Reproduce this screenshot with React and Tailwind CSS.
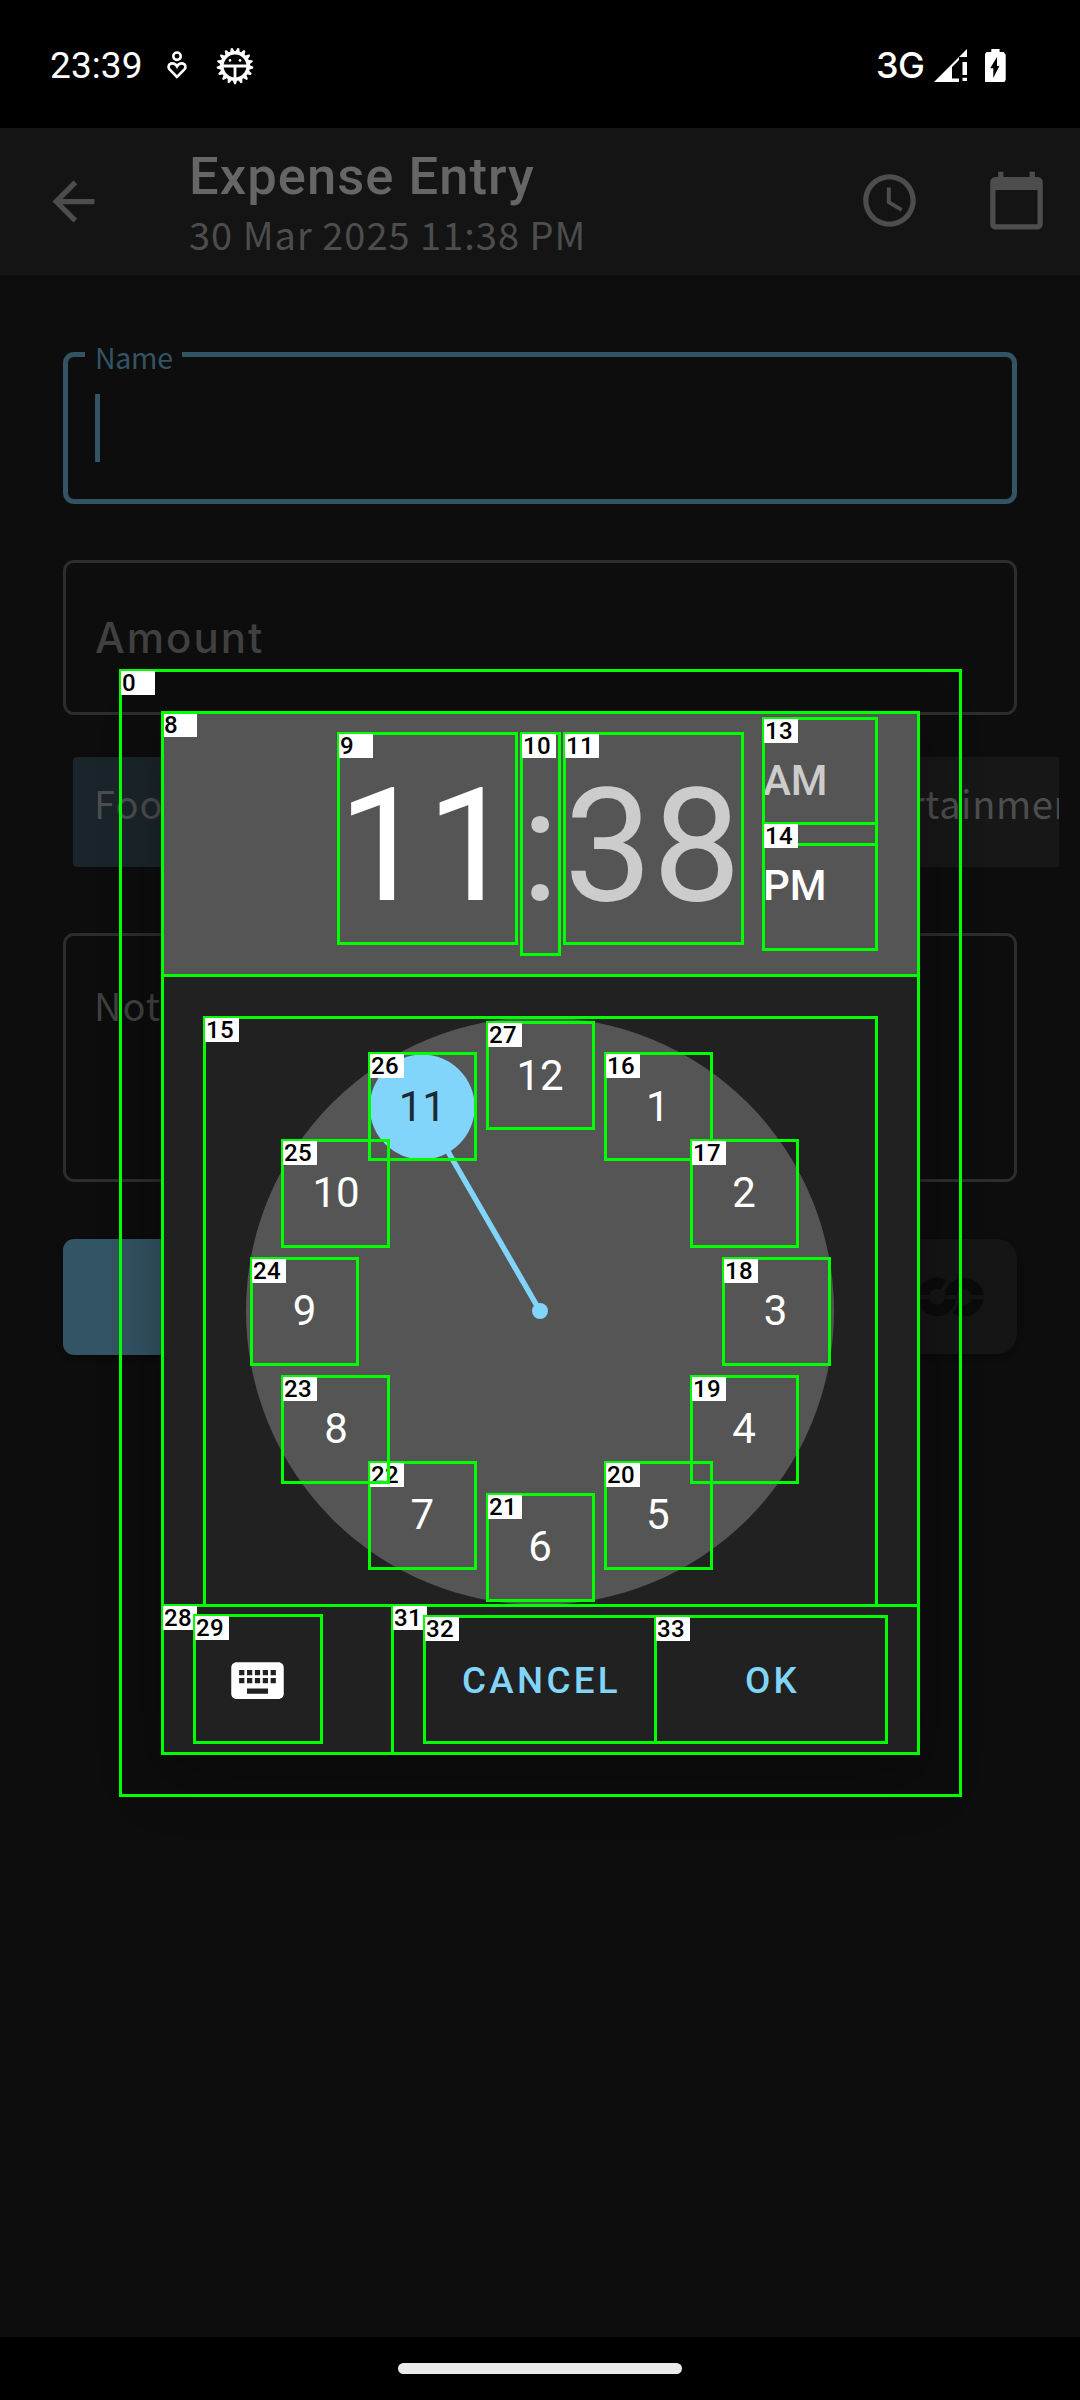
import { MdArrowBack, MdAccessTime, MdCalendarToday, MdKeyboard } from "react-icons/md";

const BOXES = [
  [0, 120, 670, 960, 1795],
  [8, 162, 712, 918, 975],
  [null, 162, 712, 918, 1753],
  [9, 338, 733, 516, 943],
  [10, 521, 733, 559, 954],
  [11, 564, 733, 742, 943],
  [13, 763, 718, 876, 844],
  [14, 763, 823, 876, 949],
  [15, 204, 1017, 876, 1605],
  [16, 605, 1053, 711, 1159],
  [17, 691, 1140, 797, 1246],
  [18, 723, 1258, 829, 1364],
  [19, 691, 1376, 797, 1482],
  [20, 605, 1462, 711, 1568],
  [21, 487, 1494, 593, 1600],
  [22, 369, 1462, 475, 1568],
  [23, 282, 1376, 388, 1482],
  [24, 251, 1258, 357, 1364],
  [25, 282, 1140, 388, 1246],
  [26, 369, 1053, 475, 1159],
  [27, 487, 1022, 593, 1128],
  [28, 162, 1605, 918, 1753],
  [29, 194, 1615, 321, 1742],
  [31, 392, 1605, 918, 1753],
  [32, 424, 1616, 655, 1742],
  [33, 655, 1616, 886, 1742],
];

const HOURS = [1, 2, 3, 4, 5, 6, 7, 8, 9, 10, 11, 12];

const GEAR_POINTS = Array.from({ length: 68 }, (_, i) => {
  const phase = i % 4;
  const r = phase < 2 ? 18.3 : 15;
  const a = (Math.PI * 2 * (i - 0.5)) / 68 + Math.PI / 2;
  return (r * Math.cos(a)).toFixed(2) + "," + (r * Math.sin(a)).toFixed(2);
}).join(" ");

function AnnotationBox({ box }) {
  const [id, x1, y1, x2, y2] = box;
  return (
    <>
      <div
        className="absolute border-[3px] border-[#00ff00]"
        style={{ left: x1 - 1, top: y1 - 1, width: x2 - x1 + 3, height: y2 - y1 + 3 }}
      />
      {id !== null && (
        <div
          className="absolute h-6 w-[34px] bg-white pl-px font-[Roboto] text-[24px] leading-[25px] font-medium tracking-[0.4px] text-black"
          style={{ left: x1 + 1, top: y1 + 1 }}
        >
          {id}
        </div>
      )}
    </>
  );
}

function StatusBar() {
  return (
    <div className="flex h-32 shrink-0 items-start justify-between bg-black pt-[39px] text-white">
      <div className="flex items-center pl-[50px]">
        <span className="w-[117px] font-[Roboto] text-[37px] leading-[54px] tracking-[0.1px]">23:39</span>
        <svg width="20" height="30" viewBox="0 0 20 30" fill="none" stroke="#fff" strokeWidth="2.6">
          <circle cx="10" cy="5.2" r="3.7" />
          <path d="M10 26 L2.6 18.4 C.6 16.2 1.6 12.6 5 12.4 C7.4 12.3 9 13.6 10 15.4 C11 13.6 12.6 12.3 15 12.4 C18.4 12.6 19.4 16.2 17.4 18.4 Z" />
        </svg>
        <svg width="40" height="40" viewBox="-20 -20 40 40" className="ml-[28px]">
          <polygon points={GEAR_POINTS} fill="#fff" />
          <circle r="11.4" fill="#000" />
          <circle cx="-5" cy="-5.6" r="1.3" fill="#fff" />
          <circle cx="5" cy="-5.6" r="1.3" fill="#fff" />
          <path d="M-12 0H12M0 0V13" stroke="#fff" strokeWidth="2.8" />
        </svg>
      </div>
      <div className="flex items-center pr-[74px]">
        <span className="w-[58px] font-[Inter] text-[36px] leading-[52px] font-medium tracking-[-0.5px]">3G</span>
        <svg width="33" height="33" viewBox="0 0 33 33" className="mr-[18px]" fill="#fff">
          <path d="M33 0V8H25L25 11L18 18V29.5H25V33H0Z" />
          <path d="M28.5 13H33V26H28.5ZM28.5 28.7H33V32H28.5Z" />
        </svg>
        <svg width="21" height="33" viewBox="0 0 21 33">
          <path d="M6.3 0H14.6V3H18.5L20.7 5.5V31L19.5 33H0V5L1.5 3H6.3Z" fill="#fff" />
          <path d="M12 8L5.2 19.3H8.3V29L14.4 17H12Z" fill="#000" />
        </svg>
      </div>
    </div>
  );
}

function AppBar() {
  return (
    <div className="flex h-[147px] shrink-0 bg-[#141414] text-[#4d4d4d]">
      <div className="flex w-[189px] items-center pl-[42px]">
        <MdArrowBack size={63} />
      </div>
      <div className="flex flex-1 flex-col pt-[18px]">
        <div className="font-[Roboto] text-[52.5px] leading-[60px] font-medium tracking-[1.05px] whitespace-nowrap text-[#666666]">Expense Entry</div>
        <div className="font-['Noto_Sans_CJK_SC'] text-[38px] leading-[56px] tracking-[1px] whitespace-nowrap">30 Mar 2025 11:38 PM</div>
      </div>
      <div className="flex items-center gap-16 pr-8 pb-[2px]">
        <MdAccessTime size={63} />
        <MdCalendarToday size={63} />
      </div>
    </div>
  );
}

function SplitIcon() {
  return (
    <svg width="68" height="44" viewBox="0 0 68 44" fill="none">
      <circle cx="47" cy="22" r="13.6" stroke="#0b0b0b" strokeWidth="11.5" />
      <path d="M30 8C26 12 26 18 27 22" stroke="#151515" strokeWidth="4" />
      <path d="M33.6 22a13.6 13.6 0 0 1-27.2 0" stroke="#151515" strokeWidth="17" />
      <path d="M33.6 22a13.6 13.6 0 0 1-27.2 0M6.4 22a13.6 13.6 0 0 1 20-12" stroke="#0b0b0b" strokeWidth="11.5" />
      <path d="M0 22H12M28 22H39M55 22H68" stroke="#151515" strokeWidth="4" />
    </svg>
  );
}

function Form() {
  return (
    <div className="flex flex-1 flex-col bg-[#0d0d0d] pt-[77px] font-['Noto_Sans_CJK_SC'] text-[38px] text-[#404040]">
      <div className="relative ml-[63px] h-[152px] w-[954px] rounded-[11px] border-[5px] border-[#335464] pt-[37px] pl-[27px]">
        <span className="absolute top-[-21px] left-[17px] h-[42px] w-[97px] bg-[#0d0d0d] pl-2.5 text-[28.5px] leading-[42px] tracking-[-0.3px] text-[#335464]">Name</span>
        <div className="h-[68px] w-[5px] bg-[#335464]" />
      </div>
      <div className="mt-14 ml-[63px] flex h-[155px] w-[954px] items-center rounded-[11px] border-[3px] border-[#2d2d2d] pl-[29px] font-[Inter] text-[42px] font-medium tracking-[2px]">
        Amount
      </div>
      <div className="mt-[42px] mr-[21px] ml-[73px] flex h-[110px] justify-between text-[#4d4d4d]">
        <div className="w-[180px] rounded-[4px] bg-[#1a252b] pl-[21px] leading-[91px] tracking-[1px]">Food</div>
        <div className="w-[259px] overflow-hidden bg-[#171717] pl-[27px] leading-[91px] tracking-[0.6px] whitespace-nowrap">Entertainment</div>
      </div>
      <div className="mt-[66px] ml-[63px] h-[249px] w-[954px] rounded-[11px] border-[3px] border-[#2d2d2d] pt-[41px] pl-[28px] leading-[56px] tracking-[1px]">
        Note
      </div>
      <div className="mx-[63px] mt-[57px] flex h-[116px] justify-between">
        <div className="w-[560px] rounded-[11px] bg-[#335464] shadow-[0_3px_6px_#00000044]" />
        <div className="flex h-[115px] w-[170px] items-center justify-end rounded-[20px] bg-[#151515] pr-[32px] shadow-[0_3px_6px_#00000044]">
          <SplitIcon />
        </div>
      </div>
    </div>
  );
}

function ClockFace() {
  return (
    <div className="relative mt-[42px] ml-[84px] size-[588px] shrink-0 rounded-full bg-[#555555]">
      <svg className="absolute inset-0" width="588" height="588" viewBox="-294 -294 588 588">
        <path d="M0 0L-117.75 -204" stroke="#81d4fa" strokeWidth="5.5" />
        <circle r="8" fill="#81d4fa" />
        <circle cx="-117.75" cy="-204" r="52.5" fill="#81d4fa" />
      </svg>
      {HOURS.map((h) => (
        <div
          key={h}
          className={
            "absolute h-[60px] w-20 text-center text-[42px] leading-[60px] " + (h === 11 ? "text-[#1b2a31]" : "text-white")
          }
          style={{
            left: 294 - 40 + 235.5 * Math.sin((h * Math.PI) / 6),
            top: 294 - 30 - 235.5 * Math.cos((h * Math.PI) / 6),
          }}
        >
          {h}
        </div>
      ))}
    </div>
  );
}

function TimeDialog() {
  return (
    <div className="absolute top-[712px] left-[162px] flex h-[1042px] w-[757px] flex-col rounded-[6px] bg-[#212121] font-[Roboto] shadow-[0_20px_60px_#00000059]">
      <div className="flex h-[263px] shrink-0 rounded-t-[6px] bg-[#555555] pl-[176px] text-[#cccccc]">
        <div className="flex h-[269px] items-center text-[157.5px] leading-none">
          <span className="w-[183px] text-white">11</span>
          <span className="w-[43px]">:</span>
          <span className="w-[199px]">38</span>
        </div>
        <div className="flex flex-col pt-[16px] text-[42px] leading-[105px] font-medium">
          <span>AM</span>
          <span className="text-white">PM</span>
        </div>
      </div>
      <ClockFace />
      <div className="flex flex-1 items-center pt-[2px] pl-[64px] text-[36.75px] font-medium tracking-[3.3px] text-[#81d4fa]">
        <MdKeyboard size={63} color="#fff" />
        <div className="ml-[137px] w-[231px] text-center">CANCEL</div>
        <div className="w-[231px] text-center">OK</div>
      </div>
    </div>
  );
}

export default function App() {
  return (
    <div className="relative flex h-[2400px] w-[1080px] flex-col overflow-hidden bg-black">
      <StatusBar />
      <AppBar />
      <Form />
      <div className="flex h-[63px] shrink-0 items-center justify-center bg-black">
        <div className="h-[11px] w-[284px] rounded-full bg-[#ebebeb]" />
      </div>
      <TimeDialog />
      {BOXES.map((box, i) => (
        <AnnotationBox key={i} box={box} />
      ))}
    </div>
  );
}
